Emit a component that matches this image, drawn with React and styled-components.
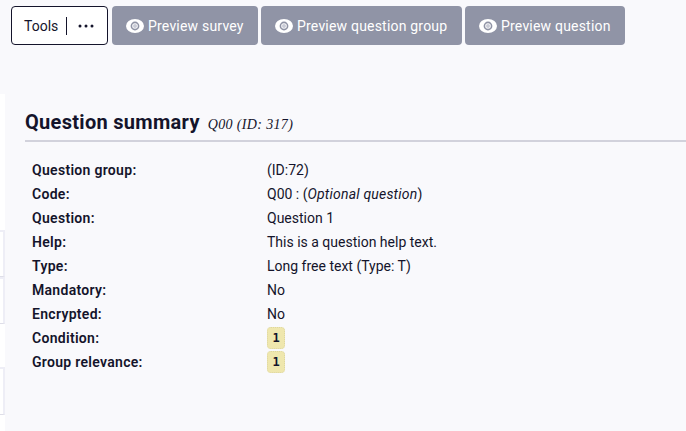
import React from "react";
import styled, { createGlobalStyle } from "styled-components";

const GlobalStyle = createGlobalStyle`
  html, body {
    margin: 0;
    padding: 0;
    background: #f9f9fc;
    font-family: "Roboto", "Liberation Sans", sans-serif;
    color: #14142b;
  }
`;

const Page = styled.div`
  width: 686px;
  height: 431px;
  overflow: hidden;
  display: grid;
  grid-template-columns: 5px 1fr;
  grid-template-rows: 94px 1fr;
`;

const Toolbar = styled.div`
  grid-column: 1 / 3;
  display: flex;
  align-items: flex-start;
  gap: 3px;
  padding: 6px 0 0 11px;
`;

const ToolsButton = styled.div`
  box-sizing: border-box;
  width: 97px;
  height: 39px;
  display: flex;
  align-items: center;
  padding-left: 12px;
  margin-right: 1px;
  border: 1px solid #14142b;
  border-radius: 4px;
  background: #fff;
  font-size: 14px;
`;

const Divider = styled.span`
  width: 1px;
  height: 18px;
  margin: 0 11px 0 8px;
  background: #14142b;
`;

const PreviewButton = styled.div`
  box-sizing: border-box;
  height: 39px;
  width: ${(p) => p.$width}px;
  display: flex;
  align-items: center;
  padding-left: 14px;
  gap: 4px;
  border-radius: 4px;
  background: #9094a6;
  color: #fff;
  font-size: 14px;
  letter-spacing: 0.2px;
`;

const Rail = styled.div`
  display: flex;
  flex-direction: column;
  background: #fff;
`;

const RailGap = styled.div`
  height: ${(p) => p.$height}px;
`;

const RailBlock = styled.div`
  box-sizing: border-box;
  height: ${(p) => p.$height}px;
  border-top: 2px solid #eeeef6;
  border-right: 2px solid #eeeef6;
  border-bottom: 1px solid #dedee8;
  background: #fff;
`;

const Content = styled.div`
  padding: 0 0 0 20px;
`;

const Heading = styled.div`
  box-sizing: border-box;
  height: 48px;
  display: flex;
  align-items: baseline;
  padding-top: 15px;
  border-bottom: 2px solid #d2d2dc;
`;

const Title = styled.h1`
  margin: 0;
  font-size: 20px;
  font-weight: 700;
  line-height: 26px;
  letter-spacing: 0.3px;
`;

const Subtitle = styled.em`
  margin-left: 8px;
  font-family: "Liberation Serif", serif;
  font-size: 14px;
  letter-spacing: 0.35px;
`;

const Rows = styled.div`
  display: grid;
  grid-template-columns: 235px 1fr;
  grid-auto-rows: 24px;
  align-items: center;
  padding: 16px 0 0 7px;
  font-size: 14px;
`;

const Label = styled.div`
  font-weight: 600;
  letter-spacing: 0.3px;
`;

const Value = styled.div`
  i {
    letter-spacing: 0.2px;
  }
`;

const Badge = styled.code`
  box-sizing: border-box;
  display: inline-flex;
  align-items: center;
  justify-content: center;
  width: 18px;
  height: 22px;
  border: 1px dotted #ddd6a0;
  border-radius: 4px;
  background: #efe7ae;
  font-family: "DejaVu Sans Mono", monospace;
  font-size: 12px;
  font-weight: 700;
`;

const Eye = () => (
  <svg width="18" height="14" viewBox="0 0 18 14" aria-hidden="true">
    <ellipse cx="9" cy="7" rx="9" ry="7" fill="#fff" />
    <circle cx="9" cy="7" r="3.6" fill="none" stroke="#9094a6" strokeWidth="1.6" />
    <circle cx="9" cy="7" r="2" fill="#c9cbd6" />
  </svg>
);

const Dots = () => (
  <svg width="16" height="4" viewBox="0 0 16 4" aria-hidden="true">
    <circle cx="2" cy="2" r="1.5" fill="#14142b" />
    <circle cx="8" cy="2" r="1.5" fill="#14142b" />
    <circle cx="14" cy="2" r="1.5" fill="#14142b" />
  </svg>
);

const previews = [
  { text: "Preview survey", width: 146 },
  { text: "Preview question group", width: 201 },
  { text: "Preview question", width: 160 },
];

const rows = [
  ["Question group:", "(ID:72)"],
  ["Code:", <>Q00 : (<i>Optional question</i>)</>],
  ["Question:", "Question 1"],
  ["Help:", "This is a question help text."],
  ["Type:", "Long free text (Type: T)"],
  ["Mandatory:", "No"],
  ["Encrypted:", "No"],
  ["Condition:", <Badge>1</Badge>],
  ["Group relevance:", <Badge>1</Badge>],
];

const App = () => (
  <Page>
    <GlobalStyle />
    <Toolbar>
      <ToolsButton>
        Tools
        <Divider />
        <Dots />
      </ToolsButton>
      {previews.map((p) => (
        <PreviewButton key={p.text} $width={p.width}>
          <Eye />
          {p.text}
        </PreviewButton>
      ))}
    </Toolbar>
    <Rail>
      <RailGap $height={136} />
      <RailBlock $height={47} />
      <RailBlock $height={47} />
      <RailGap $height={43} />
      <RailBlock $height={48} />
    </Rail>
    <Content>
      <Heading>
        <Title>Question summary</Title>
        <Subtitle>Q00 (ID: 317)</Subtitle>
      </Heading>
      <Rows>
        {rows.map(([label, value]) => (
          <React.Fragment key={label}>
            <Label>{label}</Label>
            <Value>{value}</Value>
          </React.Fragment>
        ))}
      </Rows>
    </Content>
  </Page>
);

export default App;
